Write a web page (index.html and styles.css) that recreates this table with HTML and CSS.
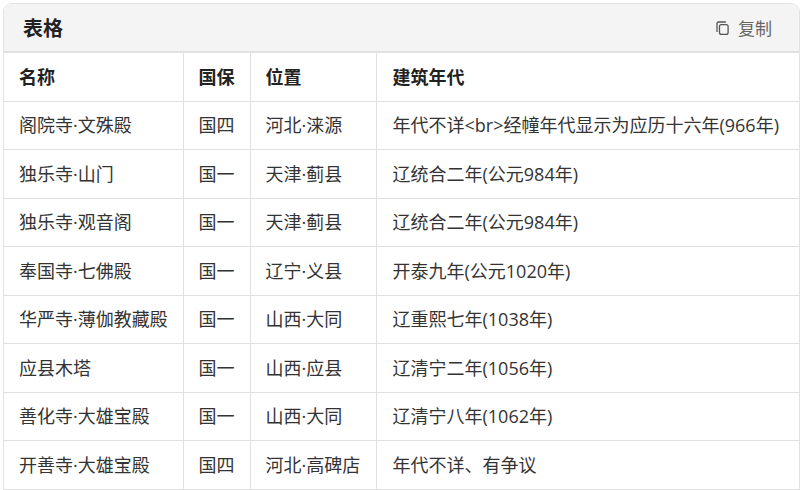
FILE: index.html
```html
<!DOCTYPE html>
<html lang="zh-CN">
<head>
<meta charset="utf-8">
<title>表格</title>
<link rel="stylesheet" href="styles.css">
</head>
<body>
<div class="card">
  <div class="card-head">
    <span class="title">表格</span>
    <button class="copy" type="button">
      <svg class="copy-icon" viewBox="0 0 16 16" width="16" height="16" aria-hidden="true">
        <path d="M3 11.4V3.6C3 2.6 3.6 2 4.6 2h6.8" fill="none" stroke="#555" stroke-width="1.3" stroke-linecap="round"/>
        <rect x="5.5" y="4.6" width="8.6" height="9.8" rx="1.9" fill="none" stroke="#555" stroke-width="1.3"/>
      </svg>
      <span>复制</span>
    </button>
  </div>
  <table class="grid">
    <colgroup>
      <col class="c1"><col class="c2"><col class="c3"><col class="c4">
    </colgroup>
    <thead>
      <tr><th>名称</th><th>国保</th><th>位置</th><th>建筑年代</th></tr>
    </thead>
    <tbody>
      <tr><td>阁院寺·文殊殿</td><td>国四</td><td>河北·涞源</td><td>年代不详&lt;br&gt;经幢年代显示为应历十六年(966年)</td></tr>
      <tr><td>独乐寺·山门</td><td>国一</td><td>天津·蓟县</td><td>辽统合二年(公元984年)</td></tr>
      <tr><td>独乐寺·观音阁</td><td>国一</td><td>天津·蓟县</td><td>辽统合二年(公元984年)</td></tr>
      <tr><td>奉国寺·七佛殿</td><td>国一</td><td>辽宁·义县</td><td>开泰九年(公元1020年)</td></tr>
      <tr><td>华严寺·薄伽教藏殿</td><td>国一</td><td>山西·大同</td><td>辽重熙七年(1038年)</td></tr>
      <tr><td>应县木塔</td><td>国一</td><td>山西·应县</td><td>辽清宁二年(1056年)</td></tr>
      <tr><td>善化寺·大雄宝殿</td><td>国一</td><td>山西·大同</td><td>辽清宁八年(1062年)</td></tr>
      <tr><td>开善寺·大雄宝殿</td><td>国四</td><td>河北·高碑店</td><td>年代不详、有争议</td></tr>
    </tbody>
  </table>
</div>
</body>
</html>
```
FILE: styles.css
```css
html, body {
  background: #ffffff;
}
body {
  margin: 3px 3px 0 3px;
  font-family: "Open Sans", "Noto Sans CJK SC", sans-serif;
  color: #333333;
}
.card {
  border: 1px solid #e2e2e2;
  border-bottom: none;
  border-radius: 9px 9px 0 0;
  overflow: hidden;
}
.card-head {
  display: flex;
  align-items: center;
  justify-content: space-between;
  height: 47px;
  padding: 0 27px 0 19px;
  background: #f4f4f4;
  border-bottom: 2px solid #e0e0e0;
}
.title {
  font-family: "Noto Sans CJK SC", sans-serif;
  font-size: 20px;
  font-weight: 700;
  color: #222222;
}
.copy {
  display: flex;
  align-items: center;
  gap: 8px;
  border: none;
  background: transparent;
  padding: 0;
  font-family: "Noto Sans CJK SC", sans-serif;
  font-size: 17px;
  color: #666666;
}
.copy-icon {
  display: block;
}
.grid {
  width: 100%;
  border-collapse: collapse;
  table-layout: fixed;
  font-size: 18px;
}
.c1 { width: 179px; }
.c2 { width: 67px; }
.c3 { width: 126px; }
.c4 { width: auto; }
.grid th, .grid td {
  border: 1px solid #e0e0e0;
  padding: 11.75px 15px;
  line-height: 24px;
  text-align: left;
  white-space: nowrap;
}
.grid tr > :first-child { border-left: none; }
.grid tr > :last-child { border-right: none; }
.grid thead tr > * { border-top: none; }
.grid th {
  font-weight: 700;
  color: #222222;
}
.grid td:last-child, .grid th:last-child {
  padding-left: 16px;
}
```
